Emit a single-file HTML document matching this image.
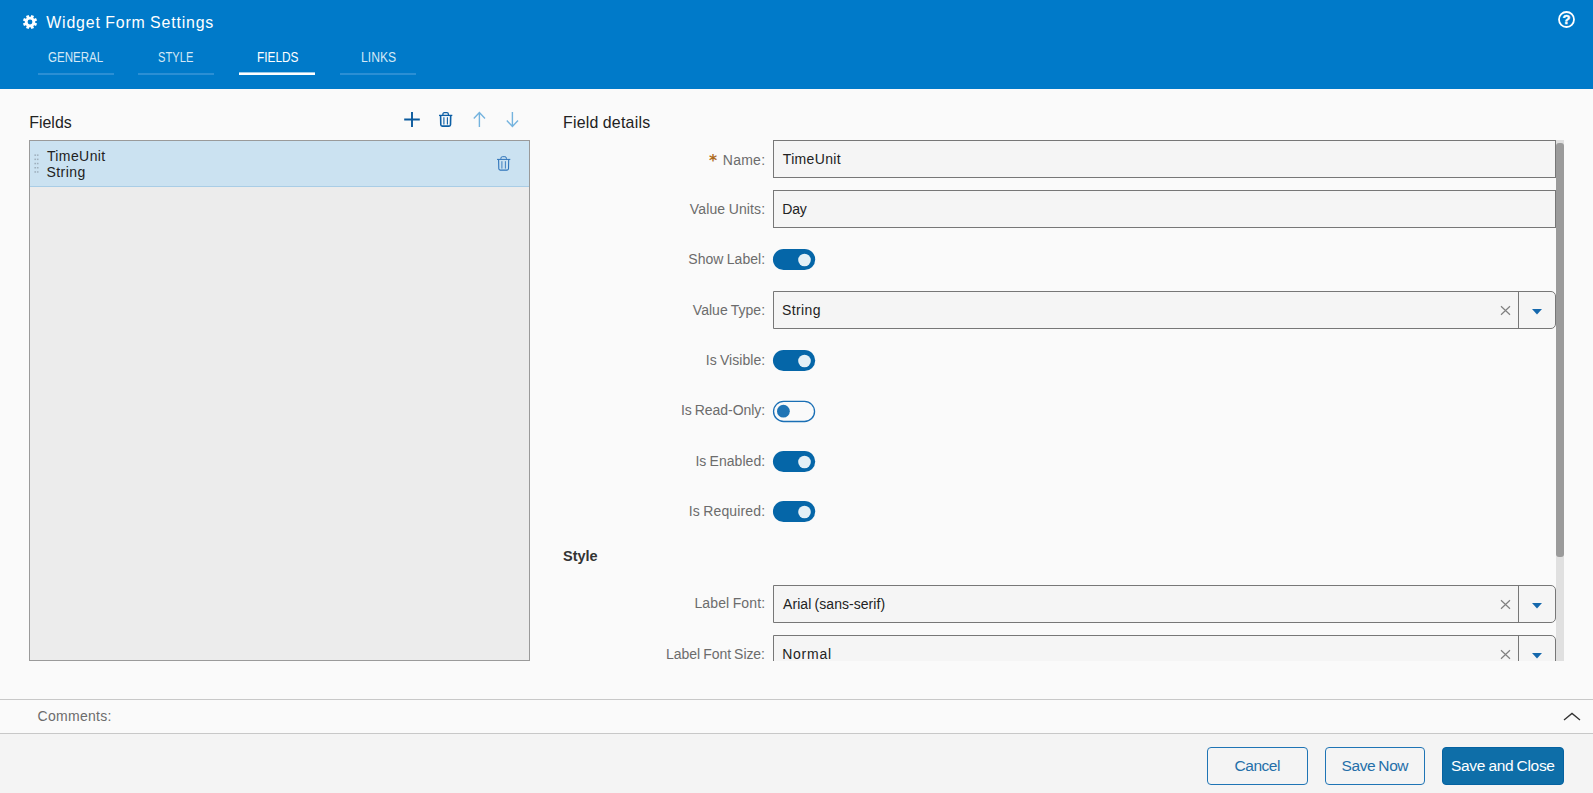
<!DOCTYPE html>
<html lang="en">
<head>
<meta charset="utf-8">
<title>Widget Form Settings</title>
<style>
*{box-sizing:border-box;margin:0;padding:0}
html,body{width:1593px;height:793px;overflow:hidden;background:#fafafa}
body{font-family:"Liberation Sans","DejaVu Sans",sans-serif;color:#222;position:relative;font-size:13.5px}
.abs{position:absolute}
.tx{position:absolute;white-space:nowrap;line-height:20px;transform-origin:0 50%;word-spacing:-.7px}
#hdr{position:absolute;left:0;top:0;width:1593px;height:89px;background:#007ac9}
.tab{position:absolute;top:73px;height:2px;width:76px;background:#2b8fd4}
.tab.on{top:72px;height:3px;background:linear-gradient(#99caea 0,#99caea 1px,#fff 1px)}
#list{position:absolute;left:29px;top:140px;width:501px;height:521px;border:1px solid #9a9a9a;background:#ececec}
#row{position:absolute;left:30px;top:141px;width:499px;height:46px;background:#cbe2f1;border-bottom:1px solid #a9cde6}
.inp{position:absolute;left:773px;width:783px;height:38px;border:1px solid #777;background:#f5f5f5}
.dd{border-radius:0 5px 5px 0}
.dd .sep{position:absolute;right:36px;top:0;width:1px;height:36px;background:#777}
#cmtbar{position:absolute;left:0;top:699px;width:1593px;height:35px;border-top:1px solid #c8c8c8;border-bottom:1px solid #c8c8c8;background:#fafafa}
#foot{position:absolute;left:0;top:734px;width:1593px;height:59px;background:#f4f4f4}
.btn{position:absolute;top:747px;height:38px;border:1px solid #1f74b5;border-radius:4px;background:#f4f4f4}
.btn.pri{background:#0e6ea8;border-color:#0562a1}
</style>
</head>
<body>
<div id="hdr">
<svg class="abs" style="left:21.7px;top:13.5px" width="16" height="16" viewBox="-8 -8 16 16"><circle r="5.2" fill="#fff"/><g stroke="#fff" stroke-width="2.9"><path d="M0 0L6.56 2.72"/><path d="M0 0L2.72 6.56"/><path d="M0 0L-2.72 6.56"/><path d="M0 0L-6.56 2.72"/><path d="M0 0L-6.56 -2.72"/><path d="M0 0L-2.72 -6.56"/><path d="M0 0L2.72 -6.56"/><path d="M0 0L6.56 -2.72"/></g><circle r="2.4" fill="#007ac9"/></svg>
<div class="tab" style="left:38px"></div>
<div class="tab" style="left:138px"></div>
<div class="tab on" style="left:239px"></div>
<div class="tab" style="left:340px"></div>
<svg class="abs" style="left:1557px;top:10px" width="19" height="19" viewBox="0 0 19 19"><circle cx="9.5" cy="9.5" r="7.5" fill="none" stroke="#fff" stroke-width="1.8"/><text x="9.5" y="14.3" text-anchor="middle" font-family="Liberation Sans, sans-serif" font-weight="bold" font-size="13" fill="#fff" stroke="#fff" stroke-width=".4">?</text></svg>
</div>
<span id="title" class="tx" style="left:46.29px;top:13.49px;font-size:15.9px;color:#fff;letter-spacing:0.820px">Widget Form Settings</span>
<span id="tab1" class="tx" style="left:47.85px;top:47.15px;font-size:14px;color:#d3e8f6;transform:scaleX(0.8260)">GENERAL</span>
<span id="tab2" class="tx" style="left:157.75px;top:47.15px;font-size:14px;color:#d3e8f6;transform:scaleX(0.7962)">STYLE</span>
<span id="tab3" class="tx" style="left:256.58px;top:47.15px;font-size:14px;color:#fff;transform:scaleX(0.8465)">FIELDS</span>
<span id="tab4" class="tx" style="left:360.51px;top:47.15px;font-size:14px;color:#d3e8f6;transform:scaleX(0.8680)">LINKS</span>

<span id="hFields" class="tx" style="left:29.23px;top:113.49px;font-size:15.9px;color:#222;letter-spacing:0.026px">Fields</span>
<span id="hDetails" class="tx" style="left:562.91px;top:113.49px;font-size:15.9px;color:#222;letter-spacing:0.268px">Field details</span>
<svg class="abs" style="left:403px;top:111px" width="18" height="17" viewBox="0 0 18 17"><path d="M9 1v15M1.2 8.5h15.6" stroke="#0b5a9d" stroke-width="1.9" fill="none"/></svg>
<svg class="abs" style="left:439px;top:112px" width="14" height="15" viewBox="0 0 14 15"><g fill="none" stroke="#0c5fa5"><path d="M3.9 3.3V2.3Q3.9 .7 5.4 .7h2.5Q9.4 .7 9.4 2.3V3.3" stroke-width="1.3"/><path d="M0 3.4h13.3" stroke-width="1.3"/><path d="M1.6 3.6l.2 9.2Q1.9 14.1 3.2 14.1h6.9q1.3 0 1.4-1.3l.2-9.2" stroke-width="1.6"/><path d="M4.9 5.2v7.4M8.4 5.2v7.4" stroke-width="1.1"/></g></svg>
<svg class="abs" style="left:472px;top:111px" width="15" height="17" viewBox="0 0 15 17"><path d="M7.4 16V1.6M1.8 7.4L7.4 1.6l5.6 5.8" stroke="#74b3de" stroke-width="1.4" fill="none"/></svg>
<svg class="abs" style="left:505.2px;top:111px" width="15" height="17" viewBox="0 0 15 17"><path d="M7.4 1v14.4M1.8 9.6l5.6 5.8 5.6-5.8" stroke="#74b3de" stroke-width="1.4" fill="none"/></svg>

<div id="list"></div>
<div id="row"></div>
<svg class="abs" style="left:34px;top:154px" width="6" height="20" viewBox="0 0 6 20"><g fill="#9fb0bd"><rect x="0.4" y="0.4" width="1.6" height="1.5"/><rect x="2.9" y="0.4" width="1.6" height="1.5"/><rect x="0.4" y="4.6" width="1.6" height="1.5"/><rect x="2.9" y="4.6" width="1.6" height="1.5"/><rect x="0.4" y="8.8" width="1.6" height="1.5"/><rect x="2.9" y="8.8" width="1.6" height="1.5"/><rect x="0.4" y="13" width="1.6" height="1.5"/><rect x="2.9" y="13" width="1.6" height="1.5"/><rect x="0.4" y="17.2" width="1.6" height="1.5"/><rect x="2.9" y="17.2" width="1.6" height="1.5"/></g></svg>
<svg class="abs" style="left:497px;top:156px" width="14" height="15" viewBox="0 0 14 15"><g fill="none" stroke="#2f74ba"><path d="M3.9 3.3V2.3Q3.9 .7 5.4 .7h2.5Q9.4 .7 9.4 2.3V3.3" stroke-width="1"/><path d="M0 3.4h13.3" stroke-width="1"/><path d="M1.6 3.6l.2 9.2Q1.9 14.1 3.2 14.1h6.9q1.3 0 1.4-1.3l.2-9.2" stroke-width="1.1"/><path d="M4.9 5.2v7.4M8.4 5.2v7.4" stroke-width="0.9"/></g></svg>
<span id="liName" class="tx" style="left:46.91px;top:146.15px;font-size:14px;color:#222;letter-spacing:0.404px">TimeUnit</span>
<span id="liType" class="tx" style="left:46.40px;top:162.15px;font-size:14px;color:#222;letter-spacing:0.454px">String</span>

<span id="ast" class="tx" style="left:709.1px;top:146.5px;font-family:'DejaVu Sans',sans-serif;font-weight:bold;font-size:15.5px;line-height:28px;color:#ad6a1c">*</span>
<span id="lName" class="tx" style="left:722.84px;top:150.15px;font-size:14px;color:#6c6c6c;letter-spacing:0.240px">Name:</span>
<div class="inp" style="top:140px"></div><span id="vName" class="tx" style="left:782.82px;top:149.15px;font-size:14px;color:#222;letter-spacing:0.323px">TimeUnit</span>
<span id="lUnits" class="tx" style="left:689.82px;top:199.15px;font-size:14px;color:#6c6c6c;letter-spacing:0.143px">Value Units:</span>
<div class="inp" style="top:190px"></div><span id="vUnits" class="tx" style="left:782.20px;top:199.15px;font-size:14px;color:#222;letter-spacing:-0.151px">Day</span>
<span id="lShow" class="tx" style="left:688.33px;top:249.15px;font-size:14px;color:#6c6c6c;letter-spacing:0.038px">Show Label:</span>
<svg class="abs" style="left:772px;top:248px" width="44" height="24" viewBox="0 0 44 24"><rect x=".95" y=".9" width="42.25" height="21.2" rx="10.6" fill="#0566a8"/><circle cx="32.5" cy="12.05" r="6.3" fill="#e4f0f6"/></svg>
<span id="lType" class="tx" style="left:692.82px;top:300.15px;font-size:14px;color:#6c6c6c;letter-spacing:0.030px">Value Type:</span>
<div class="inp dd" style="top:291px"><span class="sep"></span><svg class="abs" style="right:43.55px;top:13.3px" width="11" height="11" viewBox="0 0 11 11"><path d="M1 1.3l9 8.4M10 1.3L1 9.7" stroke="#808080" stroke-width="1.2" fill="none"/></svg><svg class="abs" style="right:13.4px;top:16.7px" width="10" height="6" viewBox="0 0 10 6"><path d="M0 0h10L5 5.4z" fill="#1568ad"/></svg></div><span id="vType" class="tx" style="left:782.00px;top:300.15px;font-size:14px;color:#222;letter-spacing:0.393px">String</span>
<span id="lVis" class="tx" style="left:705.84px;top:350.15px;font-size:14px;color:#6c6c6c;letter-spacing:0.030px">Is Visible:</span>
<svg class="abs" style="left:772px;top:349px" width="44" height="24" viewBox="0 0 44 24"><rect x=".95" y=".9" width="42.25" height="21.2" rx="10.6" fill="#0566a8"/><circle cx="32.5" cy="12.05" r="6.3" fill="#e4f0f6"/></svg>
<span id="lRO" class="tx" style="left:680.88px;top:400.15px;font-size:14px;color:#6c6c6c;letter-spacing:-0.056px">Is Read-Only:</span>
<svg class="abs" style="left:772px;top:400px" width="44" height="23" viewBox="0 0 44 23"><rect x="1.55" y="1.4" width="41" height="20.1" rx="10.05" fill="#fafafa" stroke="#1a6fb5" stroke-width="1.3"/><circle cx="11.4" cy="11.2" r="6.4" fill="#1f74b5"/></svg>
<span id="lEn" class="tx" style="left:695.43px;top:451.15px;font-size:14px;color:#6c6c6c;letter-spacing:0.033px">Is Enabled:</span>
<svg class="abs" style="left:772px;top:450px" width="44" height="24" viewBox="0 0 44 24"><rect x=".95" y=".9" width="42.25" height="21.2" rx="10.6" fill="#0566a8"/><circle cx="32.5" cy="12.05" r="6.3" fill="#e4f0f6"/></svg>
<span id="lReq" class="tx" style="left:688.73px;top:501.15px;font-size:14px;color:#6c6c6c;letter-spacing:0.146px">Is Required:</span>
<svg class="abs" style="left:772px;top:500px" width="44" height="24" viewBox="0 0 44 24"><rect x=".95" y=".9" width="42.25" height="21.2" rx="10.6" fill="#0566a8"/><circle cx="32.5" cy="12.05" r="6.3" fill="#e4f0f6"/></svg>
<span id="hStyle" class="tx" style="left:563.08px;top:545.98px;font-size:14.5px;color:#333;font-weight:bold;letter-spacing:-0.024px">Style</span>
<span id="lFont" class="tx" style="left:694.39px;top:593.15px;font-size:14px;color:#6c6c6c;letter-spacing:0.136px">Label Font:</span>
<div class="inp dd" style="top:585px"><span class="sep"></span><svg class="abs" style="right:43.55px;top:13.3px" width="11" height="11" viewBox="0 0 11 11"><path d="M1 1.3l9 8.4M10 1.3L1 9.7" stroke="#808080" stroke-width="1.2" fill="none"/></svg><svg class="abs" style="right:13.4px;top:16.7px" width="10" height="6" viewBox="0 0 10 6"><path d="M0 0h10L5 5.4z" fill="#1568ad"/></svg></div><span id="vFont" class="tx" style="left:783.09px;top:594.15px;font-size:14px;color:#222;letter-spacing:0.045px">Arial (sans-serif)</span>
<div class="abs" style="left:560px;top:630px;width:1000px;height:31px;overflow:hidden">
<div class="inp dd" style="left:213px;top:5px"><span class="sep"></span><svg class="abs" style="right:43.55px;top:13.3px" width="11" height="11" viewBox="0 0 11 11"><path d="M1 1.3l9 8.4M10 1.3L1 9.7" stroke="#808080" stroke-width="1.2" fill="none"/></svg><svg class="abs" style="right:13.4px;top:16.7px" width="10" height="6" viewBox="0 0 10 6"><path d="M0 0h10L5 5.4z" fill="#1568ad"/></svg></div>
</div>
<div class="abs" style="left:0;top:0;width:1593px;height:661px;overflow:hidden"><span id="lSize" class="tx" style="left:666.11px;top:644.15px;font-size:14px;color:#6c6c6c;letter-spacing:-0.060px">Label Font Size:</span><span id="vSize" class="tx" style="left:782.19px;top:644.15px;font-size:14px;color:#222;letter-spacing:0.749px">Normal</span></div>

<div class="abs" style="left:1556px;top:140px;width:8px;height:521px;background:#e0e0e0"></div>
<div class="abs" style="left:1556px;top:143px;width:8px;height:414px;background:#9b9b9b;border-radius:3px"></div>

<div id="cmtbar"><svg class="abs" style="left:1563px;top:11px" width="18" height="10" viewBox="0 0 18 10"><path d="M1 9L9 2.4L17 9" stroke="#333" stroke-width="1.3" fill="none"/></svg></div>
<span id="cmt" class="tx" style="left:37.57px;top:706.15px;font-size:14px;color:#6c6c6c;letter-spacing:0.292px">Comments:</span>
<div id="foot"></div>
<div class="btn" style="left:1207px;width:101px"></div>
<div class="btn" style="left:1325px;width:100px"></div>
<div class="btn pri" style="left:1442px;width:122px"></div>
<span id="bCancel" class="tx" style="left:1234.50px;top:755.63px;font-size:15.5px;color:#256fa9;letter-spacing:-0.455px">Cancel</span>
<span id="bSave" class="tx" style="left:1341.50px;top:755.63px;font-size:15.5px;color:#256fa9;letter-spacing:-0.413px">Save Now</span>
<span id="bClose" class="tx" style="left:1451.05px;top:755.63px;font-size:15.5px;color:#fff;letter-spacing:-0.319px">Save and Close</span>
</body>
</html>
